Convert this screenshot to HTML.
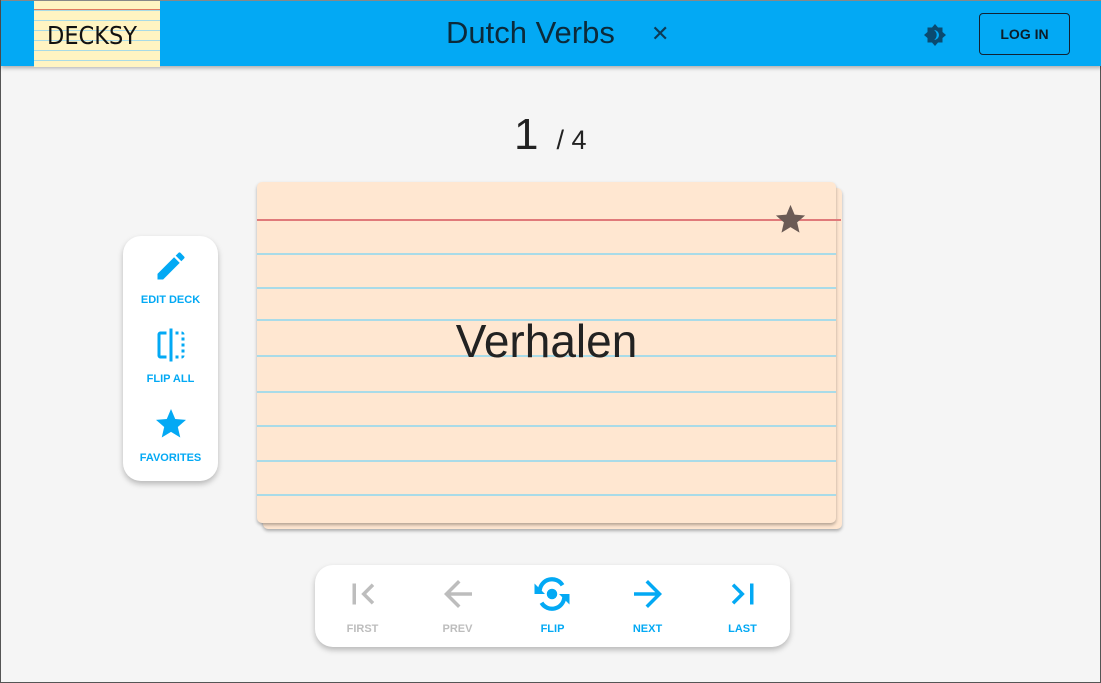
<!DOCTYPE html>
<html><head><meta charset="utf-8"><style>
*{box-sizing:border-box;margin:0;padding:0}
html,body{width:1101px;height:683px;overflow:hidden}
body{background:#f5f5f5;font-family:"Liberation Sans",sans-serif;position:relative;border-left:1px solid #555;border-bottom:1px solid #555;border-right:1px solid #555}
.hdr{position:absolute;left:0;top:0;width:1101px;height:66px;background:#03a9f4;box-shadow:0 2px 4px rgba(0,0,0,.3);border-top:1px solid #888}
.logo{position:absolute;left:33px;top:0;width:126px;height:66px;background:#fff4c2;
background-image:repeating-linear-gradient(to bottom,transparent 0,transparent 9px,#a8dbe6 9px,#a8dbe6 10px);overflow:hidden}
.logo .red{position:absolute;left:0;right:0;top:8px;height:1px;background:#e07a5f}
.logo span{position:absolute;left:13px;top:20px;font-family:"DejaVu Sans",sans-serif;font-size:25px;color:#111;transform:scaleX(0.9);transform-origin:left}
.title{position:absolute;left:445px;top:14px;font-size:31px;color:#0c2a3a}
.x{position:absolute;left:650px;top:20px;font-size:22px;color:#0c3a55}
.login{position:absolute;left:978px;top:12px;width:91px;height:42px;border:1px solid #123;border-radius:4px;font-size:14px;color:#0c1c28;text-align:center;line-height:40px;font-weight:bold}
.cnt{position:absolute;left:513px;top:110px;font-size:44px;color:#222}
.cnt small{font-size:27px;margin-left:18px}
.side{position:absolute;left:122px;top:236px;width:95px;height:245px;background:#fff;border-radius:18px;box-shadow:0 3px 6px rgba(0,0,0,.25)}
.si{position:absolute;left:0;width:95px;text-align:center;font-size:11px;font-weight:bold;color:#03a9f4}
.card{position:absolute;background:#ffe7d1;border-radius:5px}
.ln{position:absolute;left:256px;width:579px;height:2px;background:#a9dbe8}
.word{position:absolute;left:256px;top:314px;width:579px;text-align:center;font-size:46px;color:#222}
.nav{position:absolute;left:314px;top:565px;width:475px;height:82px;background:#fff;border-radius:18px;box-shadow:0 3px 6px rgba(0,0,0,.25)}
.ni{position:absolute;top:0;width:95px;text-align:center;font-size:11px;font-weight:bold}
.ni svg{position:absolute;left:27px;top:8px}
.ni div{position:absolute;top:58px;width:95px}
</style></head><body>
<div class="hdr">
 <div class="logo"><div class="red"></div><span>DECKSY</span></div>
 <div class="title">Dutch Verbs</div>
 <div class="x">✕</div>
 <svg style="position:absolute;left:922px;top:22px" width="24" height="24" viewBox="0 0 24 24"><path fill="#0a4a70" d="M12 1l3 3.5h4.5v4.5L23 12l-3.5 3v4.5H15L12 23l-3-3.5H4.5V15L1 12l3.5-3V4.5H9z"/><path fill="#03a9f4" d="M11 7a5 5 0 0 1 0 10a6 6 0 0 0 0-10z"/></svg>
 <div class="login">LOG IN</div>
</div>
<div class="cnt">1<small>/ 4</small></div>
<div class="side">
 <svg style="position:absolute;left:30px;top:12px" width="36" height="36" viewBox="0 0 24 24"><path fill="#03a9f4" d="M3 17.25V21h3.75L17.81 9.94l-3.75-3.75L3 17.25zM20.71 7.04a1 1 0 0 0 0-1.41l-2.34-2.34a1 1 0 0 0-1.41 0l-1.83 1.83 3.75 3.75 1.83-1.83z"/></svg>
 <div class="si" style="top:58px">EDIT DECK</div>
 <svg style="position:absolute;left:30px;top:91px" width="36" height="36" viewBox="0 0 24 24"><path fill="#03a9f4" d="M15 21h2v-2h-2v2zm4-12h2V7h-2v2zM3 5v14c0 1.1.9 2 2 2h4v-2H5V5h4V3H5c-1.1 0-2 .9-2 2zm16-2v2h2c0-1.1-.9-2-2-2zm-8 20h2V1h-2v22zm8-6h2v-2h-2v2zM15 5h2V3h-2v2zm4 8h2v-2h-2v2zm0 8c1.1 0 2-.9 2-2h-2v2z"/></svg>
 <div class="si" style="top:137px">FLIP ALL</div>
 <svg style="position:absolute;left:30px;top:170px" width="36" height="36" viewBox="0 0 24 24"><path fill="#03a9f4" d="M12 17.27L18.18 21l-1.64-7.03L22 9.24l-7.19-.61L12 2 9.19 8.63 2 9.24l5.46 4.73L5.82 21z"/></svg>
 <div class="si" style="top:216px">FAVORITES</div>
</div>
<div class="card" style="left:262px;top:188px;width:579px;height:341px;box-shadow:0 2px 3px rgba(0,0,0,.3)"></div>
<div class="card" style="left:256px;top:182px;width:579px;height:341px;box-shadow:0 2px 3px rgba(0,0,0,.3)"></div>
<div style="position:absolute;left:256px;top:219px;width:584px;height:2px;background:#e07a7a"></div>
<div class="ln" style="top:253px"></div><div class="ln" style="top:287px"></div><div class="ln" style="top:319px"></div><div class="ln" style="top:355px"></div><div class="ln" style="top:391px"></div><div class="ln" style="top:425px"></div><div class="ln" style="top:460px"></div><div class="ln" style="top:494px"></div>
<svg style="position:absolute;left:772px;top:202px" width="35" height="35" viewBox="0 0 24 24"><path fill="#6b5b55" d="M12 17.27L18.18 21l-1.64-7.03L22 9.24l-7.19-.61L12 2 9.19 8.63 2 9.24l5.46 4.73L5.82 21z"/></svg>
<div class="word">Verhalen</div>
<div class="nav">
 <div class="ni" style="left:0px;color:#bdbdbd"><svg width="42" height="42" viewBox="0 0 24 24"><path fill="#bdbdbd" d="M18.41 16.59L13.82 12l4.59-4.59L17 6l-6 6 6 6zM6 6h2v12H6z"/></svg><div>FIRST</div></div>
 <div class="ni" style="left:95px;color:#bdbdbd"><svg width="42" height="42" viewBox="0 0 24 24"><path fill="#bdbdbd" d="M20 11H7.83l5.59-5.59L12 4l-8 8 8 8 1.41-1.41L7.83 13H20v-2z"/></svg><div>PREV</div></div>
 <div class="ni" style="left:190px;color:#03a9f4"><svg width="42" height="42" viewBox="0 0 24 24" style="left:26px;top:8px"><g fill="none" stroke="#03a9f4" stroke-width="2.4"><path d="M5 10a7 7 0 0 1 13-3"/><path d="M19 14a7 7 0 0 1-13 3"/></g><path fill="#03a9f4" d="M2 6v6h6zM22 18v-6h-6z"/><circle cx="12" cy="12" r="3" fill="#03a9f4"/></svg><div>FLIP</div></div>
 <div class="ni" style="left:285px;color:#03a9f4"><svg width="42" height="42" viewBox="0 0 24 24"><path fill="#03a9f4" d="M12 4l-1.41 1.41L16.17 11H4v2h12.17l-5.58 5.59L12 20l8-8z"/></svg><div>NEXT</div></div>
 <div class="ni" style="left:380px;color:#03a9f4"><svg width="42" height="42" viewBox="0 0 24 24"><path fill="#03a9f4" d="M5.59 7.41L10.18 12l-4.59 4.59L7 18l6-6-6-6zM16 6h2v12h-2z"/></svg><div>LAST</div></div>
</div>
</body></html>
